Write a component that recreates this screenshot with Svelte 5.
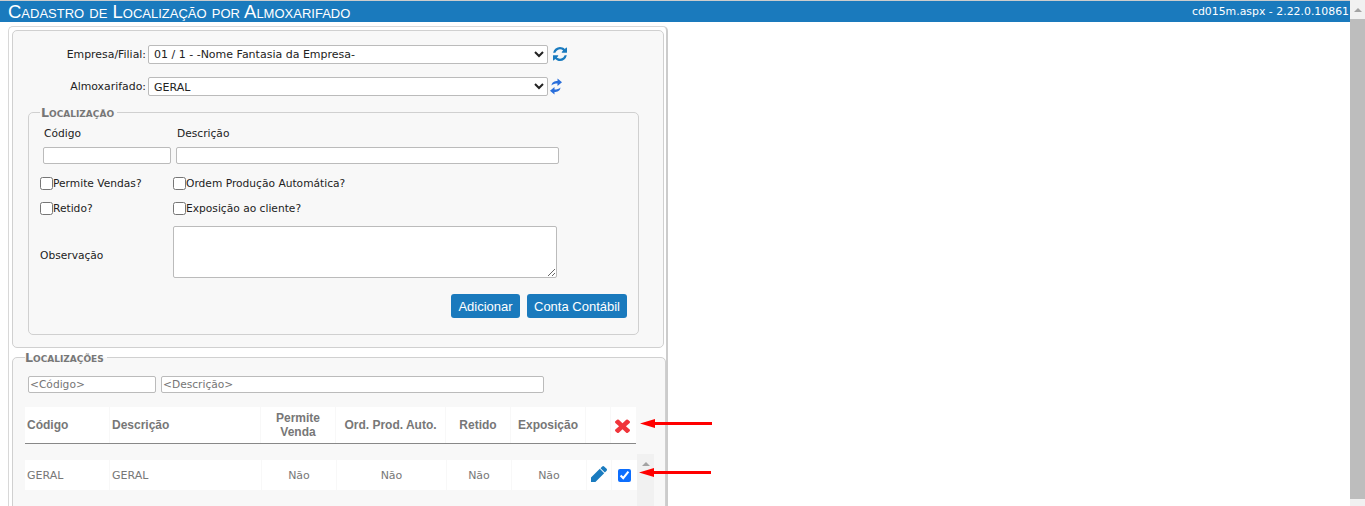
<script>
  const cols = ['Código', 'Descrição', 'Permite Venda', 'Ord. Prod. Auto.', 'Retido', 'Exposição'];
  const row = ['GERAL', 'GERAL', 'Não', 'Não', 'Não', 'Não'];
</script>

<div class="root">
  <div class="main">
    <header class="bar">
      <h1>Cadastro de Localização por Almoxarifado</h1>
      <span class="ver">cd015m.aspx - 2.22.0.10861</span>
    </header>
    <div class="wrap">
      <section class="panel">
        <div class="frow first">
          <label for="emp">Empresa/Filial:</label>
          <select id="emp"><option>01 / 1 - -Nome Fantasia da Empresa-</option></select>
          <svg class="ic-refresh" viewBox="0 0 1536 1536" width="14" height="14" aria-hidden="true"><path fill="#1a7bbf" d="M1511 928q0 5-1 7-64 268-268 434.500t-478 166.500q-146 0-282.500-55t-243.500-157l-129 129q-19 19-45 19t-45-19-19-45v-448q0-26 19-45t45-19h448q26 0 45 19t19 45-19 45l-137 137q71 66 161 102t187 36q134 0 250-65t186-179q11-17 53-117 8-23 30-23h192q13 0 22.500 9.500t9.500 22.500zM1536 128v448q0 26-19 45t-45 19h-448q-26 0-45-19t-19-45 19-45l138-138q-148-137-349-137-134 0-250 65t-186 179q-11 17-53 117-8 23-30 23h-199q-13 0-22.500-9.500t-9.500-22.500v-7q65-268 270-434.500t480-166.500q146 0 284 55.500t245 156.500l130-129q19-19 45-19t45 19 19 45z"/></svg>
        </div>
        <div class="frow second">
          <label for="alm">Almoxarifado:</label>
          <select id="alm"><option>GERAL</option></select>
          <svg class="ic-swap" viewBox="0 0 24 34" width="12" height="17" aria-hidden="true"><path fill="#2a6fdb" d="M3 15C4 8 9 6 15 6V1l9 7.500-9 7.500v-5c-5 0-9 1-12 4zM21 19c-1 7-6 9-12 9v5l-9-7.500L9 18v5c5 0 9-1 12-4z"/></svg>
        </div>

        <fieldset class="fs loc">
          <legend>Localização</legend>
          <div class="heads"><span>Código</span><span>Descrição</span></div>
          <div class="inputs"><input class="code" type="text" /><input class="desc" type="text" /></div>
          <div class="checks one">
            <label class="chk"><input type="checkbox" />Permite Vendas?</label>
            <label class="chk"><input type="checkbox" />Ordem Produção Automática?</label>
          </div>
          <div class="checks two">
            <label class="chk"><input type="checkbox" />Retido?</label>
            <label class="chk"><input type="checkbox" />Exposição ao cliente?</label>
          </div>
          <div class="obs">
            <label for="obs">Observação</label>
            <textarea id="obs"></textarea>
          </div>
          <div class="btns">
            <button class="b1">Adicionar</button>
            <button class="b2">Conta Contábil</button>
          </div>
        </fieldset>
      </section>

      <fieldset class="fs list">
        <legend>Localizações</legend>
        <div class="filters">
          <input class="fcode" type="text" placeholder="<Código>" />
          <input class="fdesc" type="text" placeholder="<Descrição>" />
        </div>
        <div class="thead">
          {#each cols as c, i}
            <div class="th" class:left={i < 2}>{c}</div>
          {/each}
          <div class="th"></div>
          <div class="th x">
            <svg viewBox="302 238 1188 1316" preserveAspectRatio="none" width="15" height="15" aria-hidden="true"><path fill="#f0353b" d="M1490 1322q0 40-28 68l-136 136q-28 28-68 28t-68-28l-294-294-294 294q-28 28-68 28t-68-28l-136-136q-28-28-28-68t28-68l294-294-294-294q-28-28-28-68t28-68l136-136q28-28 68-28t68 28l294 294 294-294q28-28 68-28t68 28l136 136q28 28 28 68t-28 68l-294 294 294 294q28 28 28 68z"/></svg>
          </div>
        </div>
        <div class="tbody">
          <div class="trow">
            {#each row as c, i}
              <div class="td" class:left={i < 2}>{c}</div>
            {/each}
            <div class="td up">
              <svg viewBox="128 149 1515 1515" width="16" height="16" aria-hidden="true"><path fill="#1a7bbf" d="M960 416l416 416-832 832h-416v-416zM1643 512q0 53-37 90l-166 166-416-416 166-165q36-38 90-38 53 0 91 38l235 234q37 39 37 91z"/></svg>
            </div>
            <div class="td up"><input class="tick" type="checkbox" checked /></div>
          </div>
          <div class="sb small"><i></i></div>
        </div>
      </fieldset>
    </div>
  </div>
  <div class="sb page"><i></i><b></b></div>

  <svg class="arrow a1" viewBox="0 0 72 9" width="72" height="9" aria-hidden="true"><path fill="#f00" d="M0 4.500 15 0v3h57v3H15v3z"/></svg>
  <svg class="arrow a2" viewBox="0 0 72 9" width="72" height="9" aria-hidden="true"><path fill="#f00" d="M0 4.500 15 0v3h57v3H15v3z"/></svg>
</div>

<style>
  :global(body) { margin: 0; background: #fff; }
  .root {
    position: relative;
    display: flex;
    height: 506px;
    overflow: hidden;
    font-family: "DejaVu Sans", Verdana, sans-serif;
    font-size: 10.67px;
    color: #222;
  }
  .main { flex: 1; min-width: 0; }
  .bar {
    height: 21px;
    border-top: 1px solid #ccc;
    background: #1a7abd;
    color: #fff;
    display: flex;
    align-items: center;
    justify-content: space-between;
    padding: 0 1px 0 8px;
  }
  h1 {
    margin: 0;
    font: 400 18.5px/21px "Liberation Sans", Arial, sans-serif;
    font-variant: small-caps;
  }
  .ver { font-size: 10.9px; }
  .wrap {
    width: 651px;
    height: 600px;
    margin: 4px 0 0 8px;
    border: 1px solid #d8d8d8;
    border-right: 2px solid #ccc;
    border-radius: 5px 5px 0 0;
    padding: 3px;
    background: #fff;
  }
  .panel {
    width: 650px;
    height: 316px;
    border: 1px solid #d0d0d0;
    border-radius: 5px;
    background: #f8f8f8;
    box-sizing: content-box;
  }
  .frow { display: flex; align-items: center; }
  .frow label { width: 133px; text-align: right; margin-right: 2px; font-size: 10.9px; }
  .first { margin-top: 14px; height: 19px; }
  .second { margin-top: 13px; height: 19px; }
  select {
    width: 400px;
    height: 19px;
    box-sizing: border-box;
    border: 1px solid #bbb;
    border-radius: 2px;
    background-color: #fff;
    font: 11px "DejaVu Sans", Verdana, sans-serif;
    color: #222;
    padding: 0 1px;
  }
  .second select { padding-top: 1px; }
  .ic-refresh { margin: -2px 0 0 5px; }
  .ic-swap { margin: -1px 0 0 2px; }
  .fs {
    margin: 0;
    padding: 0;
    border: 1px solid #d0d0d0;
    border-radius: 5px;
    box-sizing: border-box;
  }
  legend {
    padding: 0 3px 0 1px;
    font: 700 12.6px/13px "DejaVu Sans", Verdana, sans-serif;
    font-variant: small-caps;
    color: #777;
  }
  .loc {
    width: 611px;
    height: 229px;
    margin: 10px 0 0 15px;
    padding: 0 0 0 11px;
  }
  .heads { display: flex; margin-top: 8px; height: 14px; line-height: 14px; padding-left: 4px; }
  .heads span:first-child { width: 133px; }
  .inputs { display: flex; gap: 5px; margin: 6px 0 0 3px; }
  input[type="text"], textarea {
    box-sizing: border-box;
    border: 1px solid #bbb;
    border-radius: 2px;
    background: #fff;
    font: 10.67px "DejaVu Sans", Verdana, sans-serif;
    padding: 1px;
    margin: 0;
    display: block;
  }
  .code { width: 128px; height: 17px; }
  .desc { width: 383px; height: 17px; }
  .checks { display: flex; }
  .checks.one { margin-top: 12px; }
  .checks.two { margin-top: 11px; }
  .chk { display: flex; align-items: center; height: 14px; }
  .chk:first-child { width: 133px; }
  .chk input { margin: 0; width: 13px; height: 13px; }
  .obs { display: flex; align-items: center; margin-top: 11px; }
  .obs label { width: 133px; margin-top: 7px; }
  textarea { width: 384px; height: 52px; resize: both; }
  .btns { display: flex; justify-content: flex-end; gap: 7px; margin: 16px 11px 0 0; }
  button {
    height: 24px;
    border: 0;
    border-radius: 3px;
    background: #1a7abd;
    color: #fff;
    font: 13px "Liberation Sans", Arial, sans-serif;
    padding: 0;
  }
  .b1 { width: 69px; }
  .b2 { width: 100px; }
  .list {
    width: 654px;
    height: 300px;
    margin-top: 3px;
    padding: 0 0 0 12px;
    background: #f8f8f8;
  }
  .list legend { padding-left: 0; }
  .filters { display: flex; gap: 5px; margin: 12px 0 0 3px; }
  .fcode { width: 128px; height: 17px; }
  .fdesc { width: 383px; height: 17px; }
  input::placeholder { color: #757575; opacity: 1; }
  .thead, .trow { display: grid; column-gap: 1px; color: #777; }
  .thead {
    grid-template-columns: 84px 150px 74px 109px 64px 74px 24px 25px;
    width: 611px;
    height: 36px;
    margin-top: 14px;
    border-bottom: 1px solid #888;
    font: 700 12px/14px "Liberation Sans", Arial, sans-serif;
  }
  .x svg { margin: 0 2px 0 0; }
  .th, .td { display: flex; align-items: center; justify-content: center; text-align: center; background: #fff; }
  .td { font-size: 11px; }
  .up > * { margin-top: -2px; }
  .left { justify-content: flex-start; text-align: left; padding-left: 2px; }
  .tbody { display: flex; margin-top: 10px; }
  .trow {
    grid-template-columns: 84px 151px 74px 109px 64px 74px 24px 25px;
    width: 612px;
    height: 30px;
    margin-top: 6px;
  }
  .tick { margin: 0; width: 13px; height: 13px; accent-color: #0d6efd; }
  .sb { background: #f1f1f1; flex: none; display: flex; flex-direction: column; align-items: center; }
  .sb i { width: 0; height: 0; border: 4px solid transparent; border-top: 0; border-bottom: 4px solid #a3a3a3; margin-top: 8px; }
  .small { width: 17px; height: 60px; }
  .page { width: 15px; height: 506px; }
  .page b { display: block; width: 15px; height: 480px; margin-top: 7px; background: #bdbdbd; }
  .arrow { position: absolute; }
  .a1 { left: 640px; top: 419px; }
  .a2 { left: 639px; top: 468px; }
</style>
